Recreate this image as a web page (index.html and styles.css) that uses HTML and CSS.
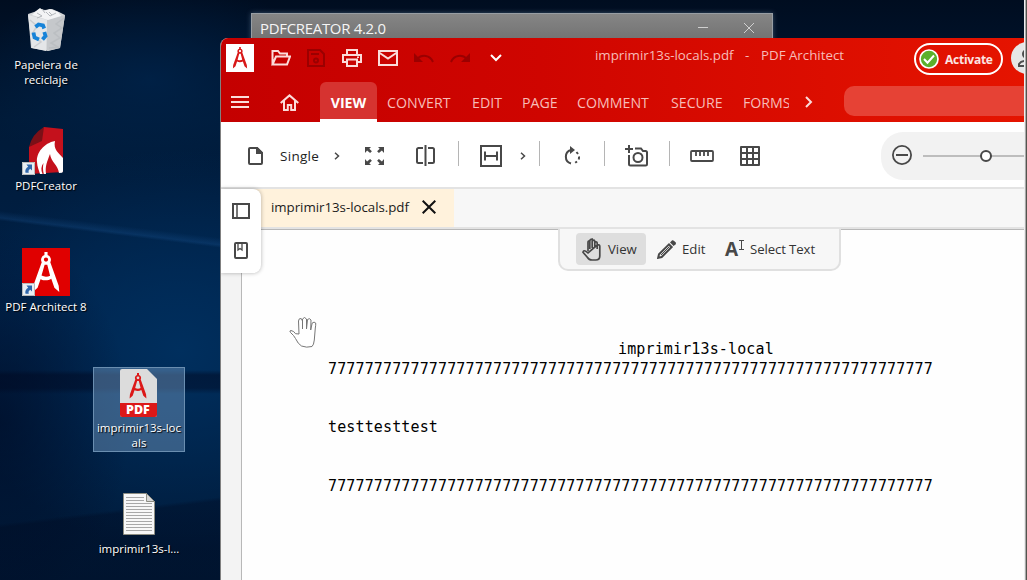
FILE: index.html
```
<!DOCTYPE html>
<html lang="es">
<head>
<meta charset="utf-8">
<title>imprimir13s-locals.pdf - PDF Architect</title>
<link rel="stylesheet" href="styles.css">
</head>
<body>
<svg class="defs" width="0" height="0">
  <defs>
    <symbol id="compass" viewBox="0 0 28 42">
      <path d="M12.400 0h3.200v3.200a5 5 0 0 1 2.800 7.200L27 34.500l.6 6.500-5-4.300-3.200-9.200c-3.200 2-7.600 2-11 .3l-3 8.900L.4 41l.6-6.500 8.600-24.100a5 5 0 0 1 2.800-7.200zM14 5.600a2.200 2.200 0 1 0 0 4.400 2.200 2.200 0 0 0 0-4.400zM12.600 13 9.400 24.200c2.700 1.500 6.200 1.500 8.800.2L15.300 13z" fill="currentColor" fill-rule="evenodd"/>
    </symbol>
    <symbol id="shortcut" viewBox="0 0 13 13">
      <path d="M0 0h13v13H0z" fill="#e9eef2"/><path d="M.5.5h12v12H.5z" fill="none" stroke="#b9b9b9"/>
      <path d="M4.500 2.500H10v6L8.200 6.800C6.500 8 6.300 9 6.800 10.800H3.500C2.700 8 4 6 6.200 4.700z" fill="#2f66ab"/>
    </symbol>
  </defs>
</svg>
<main class="desktop">
  <div class="shortcut s-bin">
    <svg width="40" height="46" viewBox="0 0 40 46">
      <path d="m2 6 9-3 3-2 5 1 7-1 7 3 6 3-5 33-12 3-17-3z" fill="#d3d6d8"/>
      <path d="m2 7 19 5-1 31-14-3z" fill="#e4e6e8"/><path d="m21 12 18-5-5 33-13 3z" fill="#c5c8cb"/>
      <path d="m6 7 4-4 4-3 4 3 6-2 8 3 3 4-13 4z" fill="#f3f4f5"/>
      <path d="m11 5 5 3-5 2m9-6 4 4 6-3m-14-4 3 4M23 4l3 3" stroke="#b4b8bc" fill="none"/>
      <path d="m38 10-8 6 6 4-8 5 6 5-9 5 7 4-9 1M4 12l7 6-5 8 9 8-7 5" fill="none" stroke="#b2b6ba" stroke-opacity=".5" stroke-width="1.500"/>
      <path d="m9.500 19 3-2.500 4.500 1 1.200 3M18.300 24l1.200 4-3 3.500M13 31.500l-4.500-2-1-5" fill="none" stroke="#1683d8" stroke-width="3.800"/>
    </svg>
    <span class="label">Papelera de<br>reciclaje</span>
  </div>
  <div class="shortcut s-creator">
    <svg width="48" height="48" viewBox="0 0 48 48">
      <path d="M22 0 41 2v43l-34 2V20z" fill="#c4111c"/><path d="M22 0 20 14 7 20q3-13 15-20z" fill="#7c1017"/>
      <path d="M33 14C22 16 14 26 15 35c.2 5 2 8 3 12h6c-1-8 1-12 4-20 1 8 8 11 9 19l3-.3q1-.7 1-2V31c-4-5-10-8-8-17z" fill="#fff"/>
      <path d="M21.500 36c-2.500 3-2.700 7-1 11h1.300c-1-4-1-7-.3-11z" fill="#c4111c"/>
      <use href="#shortcut" y="35" width="13" height="13"/>
    </svg>
    <span class="label">PDFCreator</span>
  </div>
  <div class="shortcut s-architect">
    <svg width="48" height="48" viewBox="0 0 48 48">
      <path d="M0 0h48v48H0z" fill="#e00000"/>
      <use href="#compass" x="10" y="4" width="28" height="41" color="#fff"/>
      <use href="#shortcut" y="35" width="13" height="13"/>
    </svg>
    <span class="label">PDF Architect 8</span>
  </div>
  <div class="shortcut s-pdf">
    <svg width="38" height="48" viewBox="0 0 38 48">
      <path d="M2 0h25l10 10v36a2 2 0 0 1-2 2H2a2 2 0 0 1-2-2V2a2 2 0 0 1 2-2z" fill="#dcdcdc"/>
      <path d="M0 34h37v12a2 2 0 0 1-2 2H2a2 2 0 0 1-2-2z" fill="#dc1818"/>
      <use href="#compass" x="9" y="4" width="18" height="26" color="#dc1818"/>
      <text class="pdf-word" x="6" y="45.300">PDF</text>
    </svg>
    <span class="label">imprimir13s-loc<br>als</span>
  </div>
  <div class="shortcut s-text">
    <svg width="32" height="42" viewBox="0 0 32 42">
      <path d="M.5.5h23l8 8v33H.5z" fill="#f7f7f7" stroke="#8d8d82"/>
      <path d="M23.500.5v8h8z" fill="#d7d7d7" stroke="#8d8d82"/>
      <path d="M3 4.500h18M3 7.500h18M3 10.500h26M3 13.500h26M3 16.500h26M3 19.500h26M3 22.500h26M3 25.500h26M3 28.500h26M3 31.500h26M3 34.500h26M3 37.500h26" stroke="#a7a7a7"/>
    </svg>
    <span class="label">imprimir13s-l...</span>
  </div>

  <section class="back-window">
    <span class="back-title">PDFCREATOR 4.2.0</span>
    <svg width="56" height="12" viewBox="0 0 56 12" fill="none" stroke="#d0d0d0"><path d="M0 5.500h10M46 1l10 10M56 1 46 11"/></svg>
  </section>

  <section class="app">
    <header class="header">
      <div class="quick">
        <span class="app-logo"><svg width="16" height="22"><use href="#compass" width="16" height="22"/></svg></span>
        <svg class="ico" width="20" height="16" viewBox="0 0 20 16"><path d="M1.500 14V1h5.500l2 2.500h7V6M1.500 14.500 5 6.500h14l-3 8H1.500z"/></svg>
        <svg class="ico off" width="18" height="18" viewBox="0 0 18 18"><path d="M1 1h12l4 4v12H1zM4 5h8"/><circle cx="9" cy="11.500" r="2"/></svg>
        <svg class="ico" width="20" height="18" viewBox="0 0 20 18"><path d="M5 5V1h10v4M5 13H1V6h18v7h-4M5 10.500h10V17H5z"/><path d="M15 8.200h2" stroke-width="1.500"/></svg>
        <svg class="ico" width="20" height="16" viewBox="0 0 20 16"><path d="M1 1h18v14H1zM1 2.500 10 8.500l9-6"/></svg>
        <svg class="ico off" width="20" height="10" viewBox="0 0 20 10"><path d="M3 6C8 1 16 2 19 9"/><path d="M0 0v9h9z" fill="currentColor" stroke="none"/></svg>
        <svg class="ico off" width="20" height="10" viewBox="0 0 20 10"><path d="M17 6C12 1 4 2 1 9"/><path d="M20 0v9h-9z" fill="currentColor" stroke="none"/></svg>
        <svg class="ico bright" width="12" height="8" viewBox="0 0 12 8"><path d="m1 1 5 5 5-5"/></svg>
        <span class="title t-file">imprimir13s-locals.pdf</span>
        <span class="title">-</span>
        <span class="title t-app">PDF Architect</span>
        <button class="activate">
          <svg width="20" height="20" viewBox="0 0 20 20"><circle cx="10" cy="10" r="9" fill="#5cb02c" stroke="#fff" stroke-width="1.700"/><path d="m5 10 3.500 3.700L15 6.500" fill="none" stroke="#fff" stroke-width="2"/></svg>
          <span>Activate</span>
        </button>
        <span class="avatar"><svg width="20" height="20" viewBox="0 0 20 20" fill="none" stroke="#4d4d4d" stroke-width="2"><circle cx="10" cy="6" r="4"/><path d="M2 18v-2q2-3 6-3h4q4 0 6 3v2z"/></svg></span>
      </div>
      <nav class="menu">
        <svg class="ico" width="18" height="12" viewBox="0 0 18 12"><path d="M0 1h18M0 6h18M0 11h18"/></svg>
        <svg class="ico home" width="19" height="17" viewBox="0 0 19 17"><path d="m.7 9 8.800-7.600L18.300 9M4 6.500V16h3.800v-5h3.400v5H15V6.500"/></svg>
        <a class="tab active">VIEW</a>
        <a class="tab w-convert">CONVERT</a>
        <a class="tab w-edit">EDIT</a>
        <a class="tab w-page">PAGE</a>
        <a class="tab w-comment">COMMENT</a>
        <a class="tab w-secure">SECURE</a>
        <a class="tab w-forms">FORMS</a>
        <svg class="ico" width="8" height="12" viewBox="0 0 8 12"><path d="m1 1 5 5-5 5"/></svg>
        <span class="search"></span>
      </nav>
    </header>

    <div class="toolbar">
      <svg width="15" height="18" viewBox="0 0 15 18"><path d="M2 1h7l5 5v10a1 1 0 0 1-1 1H2a1 1 0 0 1-1-1V2a1 1 0 0 1 1-1z"/><path d="M9 1v5h5z" fill="currentColor"/></svg>
      <span class="single">Single</span>
      <svg width="6" height="8" viewBox="0 0 6 8" stroke-width="1.500"><path d="m1 .8 3.500 3.200L1 7.200"/></svg>
      <svg width="19" height="18" viewBox="0 0 19 18"><path d="M0 0h6L4.300 1.700l2.600 2.600-1.800 1.800-3-2.700L0 6zM19 0h-6l1.700 1.700-2.600 2.600 1.800 1.800 3-2.700L19 6zM0 18h6l-1.700-1.700 2.600-2.600-1.800-1.800-3 2.700L0 12zM19 18h-6l1.700-1.700-2.600-2.600 1.800-1.800 3 2.700L19 12z" fill="currentColor" stroke="none"/></svg>
      <svg width="19" height="21" viewBox="0 0 19 21"><path d="M7 3H2.500A1.500 1.500 0 0 0 1 4.500v12A1.500 1.500 0 0 0 2.500 18H7M12 3h4.500A1.500 1.500 0 0 1 18 4.500v12a1.500 1.500 0 0 1-1.500 1.500H12M9.500 0v21"/></svg>
      <i class="sep"></i>
      <svg width="22" height="22" viewBox="0 0 22 22"><path d="M1 1h20v20H1zM5 6.500v9M17 6.500v9M5 11h12"/></svg>
      <svg width="6" height="8" viewBox="0 0 6 8" stroke-width="1.500"><path d="m1 .8 3.500 3.200L1 7.200"/></svg>
      <i class="sep"></i>
      <svg width="18" height="20" viewBox="0 0 18 20"><path d="M7 17.500A7 7 0 0 1 7 4"/><path d="M6 0v8l5-4z" fill="currentColor" stroke="none"/><path d="m12.500 6 1.500 2M15 10.500q.2 1.500-.3 3M13 15.500l-1.800 1.300"/></svg>
      <i class="sep"></i>
      <svg width="23" height="22" viewBox="0 0 23 22"><path d="M4 0v8M0 4h8M4 10v9a1.500 1.500 0 0 0 1.500 1.500h15A1.500 1.500 0 0 0 22 19V7.500A1.500 1.500 0 0 0 20.500 6H18l-2-2.500h-6"/><circle cx="13" cy="12.500" r="4.500"/></svg>
      <i class="sep"></i>
      <svg width="24" height="12" viewBox="0 0 24 12"><path d="M2 1h20a1 1 0 0 1 1 1v8a1 1 0 0 1-1 1H2a1 1 0 0 1-1-1V2a1 1 0 0 1 1-1zM6 1v5M10 1v5M14 1v5M18 1v5" stroke-width="1.800"/></svg>
      <svg width="20" height="20" viewBox="0 0 20 20"><path d="M1 1h18v18H1zM7 1v18M13 1v18M1 7h18M1 13h18" stroke-linejoin="round"/></svg>
      <div class="zoom">
        <svg width="20" height="20" viewBox="0 0 20 20"><circle cx="10" cy="10" r="9.100" stroke-width="1.800"/><path d="M4 10h12"/></svg>
        <span class="track"><i class="knob"></i></span>
      </div>
    </div>

    <div class="docs">
      <div class="doc-tab">
        <span>imprimir13s-locals.pdf</span>
        <svg width="14" height="14" viewBox="0 0 14 14" fill="none" stroke="#111" stroke-width="2"><path d="m.7.7 12.600 12.600M13.300.7.7 13.300"/></svg>
      </div>
    </div>

    <div class="work">
      <div class="gutter"></div>
      <article class="page">
        <p class="line heading">imprimir13s-local</p>
        <p class="line">777777777777777777777777777777777777777777777777777777777777777777</p>
        <p class="line spaced">testtesttest</p>
        <p class="line spaced">777777777777777777777777777777777777777777777777777777777777777777</p>
      </article>
    </div>

    <aside class="side">
      <svg width="18" height="16" viewBox="0 0 18 16"><path d="M1 1h16v14H1z"/><path d="M5 1v14" stroke-width="1.500"/></svg>
      <svg width="14" height="17" viewBox="0 0 14 17"><rect x="1" y="1" width="12" height="15" rx="1"/><path d="M4 1v7l2-1.500L8 8V1" stroke-width="1.300"/></svg>
    </aside>

    <div class="modes">
      <div class="mode m-view">
        <svg width="19" height="23" viewBox="0 0 19 23"><path d="M6 13V4.500q0-2 1.800-1.500v8M7.800 10V3q.2-2 2.400-2v9M10.200 3q2.400-2 2.600.5V10M12.800 4q2.400-.7 2.400 1.500V11M15.200 7q2.600-.8 2.600 1.500V18q0 4-4 4H10q-3 0-4.500-2.500L1 14.200q.5-2.400 3-.8L6 15z" stroke-width="1.700"/></svg>
        <span>View</span>
      </div>
      <div class="mode m-edit">
        <svg width="19" height="19" viewBox="0 0 19 19"><path d="m1.200 17.800.8-3.500L12 4.300l2.700 2.700L4.700 17z"/><path d="m4 15 8.500-8.500" stroke-width="1"/><path d="m13 2.400 2.200-2.200q1.200-.4 3.600 2.200.4 1-.2 1.800L16.600 6z" fill="currentColor" stroke="none"/></svg>
        <span>Edit</span>
      </div>
      <div class="mode m-select">
        <span class="select-glyph">A</span>
        <svg class="caret" width="5" height="10" viewBox="0 0 5 10" stroke-width="1"><path d="M0 .5h5M0 9.500h5M2.500 0v10"/></svg>
        <span>Select Text</span>
      </div>
    </div>

    <svg class="hand" width="28" height="32" viewBox="0 0 28 32"><path d="M10 18 9.500 5q.2-3 2.700-2.500L13.500 5v8-10q2-3 4 0v10l1-9.500q2-2 3.500.5l-.3 10 1.500-7q2-1.700 3.500 0 .2 2-.4 5l-1 12q-.5 5-2.300 6.500-5.500 1.500-10.500-.5-3.500-2-6-7.500-1.500-3-5-6-1.500-2 .5-2 3 .5 4.500 3.200z" fill="#fff" stroke="#777"/></svg>
  </section>
  <div class="edge"></div>
</main>
</body>
</html>
```
FILE: styles.css
```
body {
  margin: 0;
  font-family: "Open Sans", "Noto Sans", sans-serif;
}

.defs {
  position: absolute;
}

.desktop {
  position: relative;
  width: 1027px;
  height: 580px;
  overflow: hidden;
  background:
    linear-gradient(173deg, transparent 520px, rgba(0, 8, 30, .35) 524px) 0 0 / 220px 580px no-repeat,
    linear-gradient(180deg, transparent 370px, rgba(0, 8, 32, .5) 375px, rgba(0, 8, 32, .45) 388px, transparent 394px),
    linear-gradient(187deg, transparent 236px, rgba(35, 100, 170, .22) 243px, transparent 246px) 0 0 / 220px 580px no-repeat,
    radial-gradient(ellipse 130px 190px at 0 420px, rgba(0, 10, 35, .6), transparent),
    radial-gradient(ellipse 230px 200px at 180px 350px, #002f5e, transparent),
    radial-gradient(ellipse 180px 100px at 150px 80px, rgba(0, 36, 76, .75), transparent),
    linear-gradient(180deg, #000d20 0, #001a38 120px, #002148 300px, #001a38 580px);
}

/* Desktop icons */
.shortcut {
  position: absolute;
  display: flex;
  flex-direction: column;
  align-items: center;
  width: 92px;
  box-sizing: border-box;
  color: #fff;
}

.label {
  font-size: 11.500px;
  line-height: 15px;
  text-align: center;
  white-space: nowrap;
  text-shadow: 1px 1px 1px #000;
}

.s-bin { left: 0; top: 8px; gap: 3px; }
.s-creator { left: 0; top: 127px; gap: 3px; }
.s-architect { left: 0; top: 248px; gap: 3px; }
.s-text { left: 93px; top: 493px; gap: 6px; }

.s-pdf {
  left: 93px;
  top: 367px;
  height: 85px;
  padding-top: 1px;
  gap: 3px;
  border: 1px solid #6a8eb0;
  background: rgba(115, 155, 195, .47);
}

.pdf-word {
  font: 800 12.500px "Open Sans", sans-serif;
  fill: #fff;
}

/* Window behind */
.back-window {
  position: absolute;
  left: 251px;
  top: 13px;
  width: 522px;
  height: 40px;
  box-sizing: border-box;
  display: flex;
  justify-content: space-between;
  align-items: flex-start;
  padding: 5px 18px 0 8px;
  border: 1px solid #979da3;
  background: linear-gradient(#858585, #747474 24px);
  box-shadow: 0 0 5px rgba(120, 150, 180, .45);
  color: #f5f5f5;
}

.back-window svg { margin-top: 3px; }

.back-title {
  font-size: 15px;
  line-height: 19px;
  letter-spacing: -.28px;
  transform-origin: left;
  transform: scaleX(.995);
}

/* Main window */
.app {
  position: absolute;
  left: 220px;
  top: 38px;
  width: 804px;
  height: 542px;
  box-sizing: border-box;
  border-left: 1px solid #808080;
  border-radius: 8px 0 0 0;
  background: #fff;
  overflow: hidden;
  display: flex;
  flex-direction: column;
}

.header {
  height: 84px;
  margin-left: -1px;
  flex: none;
  background: linear-gradient(90deg, #c40000, #cf0500 40%, #e51400);
  color: #f7bcb8;
}

.ico {
  flex: none;
  fill: none;
  stroke: currentColor;
  stroke-width: 2;
  color: #fbdcda;
}

.ico.off { color: #9b0000; }
.ico.bright { color: #fff; }

.quick {
  display: grid;
  height: 40px;
  grid-template-columns: 45px 36px 35px 36px 36px 36px 40px 105px 150px 16px 153px 97px 32px;
  align-items: center;
  padding-left: 6px;
}

.app-logo {
  display: grid;
  place-items: center;
  width: 28px;
  height: 28px;
  background: #fff;
  color: #d81818;
}

.title {
  font-size: 13.300px;
  line-height: 20px;
  margin-top: -7px;
  white-space: nowrap;
}

.activate {
  display: flex;
  align-items: center;
  gap: 6px;
  width: 89px;
  height: 32px;
  margin-top: 2px;
  padding: 0 3px;
  border: 2px solid #fff;
  border-radius: 16px;
  background: none;
  color: #fbe4e2;
  font: 700 12px "Open Sans", sans-serif;
  letter-spacing: -.25px;
}

.avatar {
  display: grid;
  place-items: center;
  width: 32px;
  height: 32px;
  border-radius: 50%;
  background: #e6e6e6;
}

.menu {
  display: flex;
  height: 40px;
  margin-top: 4px;
  padding-left: 11px;
  align-items: center;
}

.home { margin: 0 21px 0 31px; }

.tab {
  font-size: 14.200px;
  line-height: 41px;
  white-space: nowrap;
  flex: none;
}

.tab.active {
  width: 57px;
  height: 37px;
  margin-right: 10px;
  border-bottom: 3px solid #fff;
  border-radius: 6px 6px 0 0;
  background: #d63330;
  color: #fff;
  font-weight: 700;
  text-align: center;
}

.w-convert { width: 85px; }
.w-edit { width: 50px; }
.w-page { width: 55px; }
.w-comment { width: 94px; }
.w-secure { width: 72px; }
.w-forms { width: 46px; margin-right: 16px; overflow: hidden; }

.search {
  width: 190px;
  height: 30px;
  margin: -2px 0 0 31px;
  border-radius: 10px;
  background: #e64235;
  flex: none;
}

.toolbar {
  display: grid;
  grid-template-columns: 32px 54px 31px 51px 42px 22px 40px 19px 25px 40px 21px 44px 21px 50px 141px 144px;
  align-items: center;
  height: 65px;
  flex: none;
  padding: 2px 0 0 27px;
  box-sizing: border-box;
}

.toolbar svg,
.side svg,
.modes svg {
  flex: none;
  fill: none;
  stroke: currentColor;
  color: #484848;
}

.toolbar svg:not([stroke-width]),
.side svg,
.modes svg:not([stroke-width]) {
  stroke-width: 2;
}

.single {
  font-size: 13.500px;
  font-weight: 500;
  letter-spacing: .3px;
  color: #222;
}

.sep {
  width: 1px;
  height: 25px;
  margin-top: -5px;
  background: #b5b5b5;
}

.zoom {
  display: flex;
  align-items: center;
  gap: 11px;
  width: 160px;
  height: 48px;
  padding-left: 11px;
  border-radius: 22px 0 0 22px;
  background: #f2f2f2;
}

.zoom svg { margin-top: -2px; }

.track {
  display: flex;
  align-items: center;
  width: 120px;
  height: 2px;
  background: #bdbdbd;
}

.knob {
  width: 8px;
  height: 8px;
  margin-left: 57px;
  border: 2px solid #484848;
  border-radius: 50%;
  background: #fff;
}

.docs {
  display: flex;
  height: 38px;
  flex: none;
  border-top: 2px solid #e3e3e3;
  border-bottom: 2px solid #e3e3e3;
  background: #f7f7f7;
}

.doc-tab {
  display: flex;
  align-items: center;
  justify-content: space-between;
  width: 233px;
  box-sizing: border-box;
  padding: 0 18px 2px 50px;
  background: #fff2dc;
  color: #1b1b1b;
  font-size: 13.300px;
  letter-spacing: -.03px;
}

.work {
  display: flex;
  flex: 1;
  border-top: 1px solid #b8b8b8;
}

.gutter {
  width: 20px;
  background: #f3f3f3;
  border-right: 1px solid #b8b8b8;
}

.page {
  flex: 1;
  padding: 110px 0 0 86px;
  background: #fefefe;
}

.line {
  margin: 0;
  font: 15px/19.600px "DejaVu Sans Mono", monospace;
  letter-spacing: .135px;
  color: #000;
  white-space: pre;
}

.heading { padding-left: 290px; }
.spaced { margin-top: 39.200px; }

.side {
  position: absolute;
  left: 0;
  top: 151px;
  width: 40px;
  height: 84px;
  box-sizing: border-box;
  display: flex;
  flex-direction: column;
  align-items: center;
  gap: 23px;
  padding-top: 14px;
  border-radius: 0 8px 8px 0;
  background: #fff;
  box-shadow: 0 0 4px rgba(0, 0, 0, .3);
}

.modes {
  position: absolute;
  left: 337px;
  top: 191px;
  width: 283px;
  height: 42px;
  box-sizing: border-box;
  display: flex;
  padding: 4px 0 0 16px;
  border: 2px solid #e0e0e0;
  border-top: 0;
  border-radius: 0 0 10px 10px;
  background: #f7f7f7;
}

.mode {
  display: flex;
  align-items: center;
  height: 32px;
  font-size: 13.200px;
  color: #333;
  white-space: nowrap;
}

.m-view {
  width: 70px;
  box-sizing: border-box;
  padding-left: 6px;
  gap: 7px;
  border-radius: 4px;
  background: #dedede;
}

.m-edit { width: 68px; padding-left: 11px; box-sizing: border-box; gap: 6px; }

.m-select { letter-spacing: -.1px; }

.select-glyph {
  width: 14px;
  margin-left: 11px;
  font-size: 19px;
  font-weight: 700;
  line-height: 32px;
  color: #484848;
}

.caret { margin: -8px 6px 0 0; }

.hand {
  position: absolute;
  left: 68px;
  top: 278px;
}

.edge {
  position: absolute;
  left: 1024px;
  top: 0;
  width: 3px;
  height: 580px;
  background: linear-gradient(90deg, #eee 1px, #aaa 1px 2px, #54544e 2px);
}
```
